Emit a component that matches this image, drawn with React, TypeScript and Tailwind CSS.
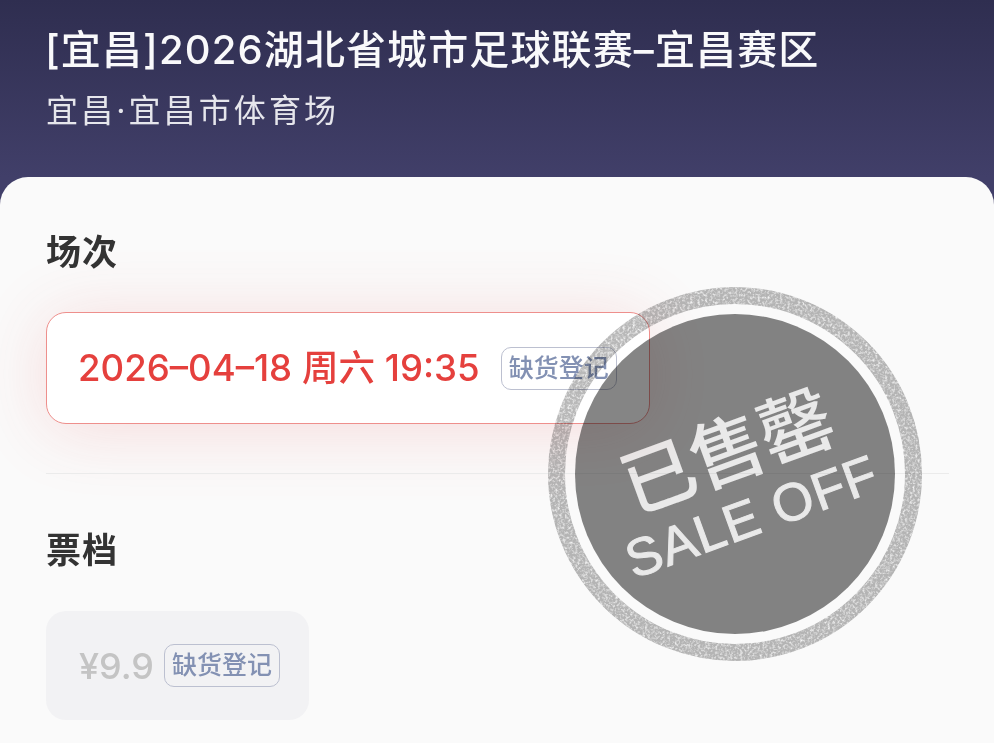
const cjk = "font-['Inter','Noto_Sans_CJK_SC',sans-serif]";

function WaitlistTag() {
  return (
    <span className="flex h-[43px] w-[116px] shrink-0 items-center justify-center rounded-[10px] border border-[#bcc0d0] text-[25px] font-medium leading-none text-[#8391b3]">
      缺货登记
    </span>
  );
}

/** Sold-out stamp that sits over the session card and the divider. */
function SoldOutStamp() {
  return (
    <svg
      viewBox="0 0 374 374"
      className="pointer-events-none absolute left-[548px] top-[287px] h-[374px] w-[374px] mix-blend-multiply"
    >
      <defs>
        <filter id="grain" filterUnits="userSpaceOnUse" x="0" y="0" width="374" height="374">
          <feTurbulence type="fractalNoise" baseFrequency="0.4" numOctaves="3" seed="4" result="noise" />
          <feColorMatrix
            in="noise"
            type="matrix"
            values="0 0 0 0 0  0 0 0 0 0  0 0 0 0 0  0 0 0 -2 1.85"
            result="speck"
          />
          <feComposite in="SourceGraphic" in2="speck" operator="in" />
          <feGaussianBlur stdDeviation="0.6" />
        </filter>
      </defs>
      <circle cx="187" cy="187" r="178.5" fill="none" stroke="#b8b8b8" strokeWidth="17" filter="url(#grain)" />
      <circle cx="187" cy="187" r="160" fill="#858585" />
      <g transform="rotate(-20 187 187)" textAnchor="middle" fill="#eeeeee">
        <text
          x="187"
          y="190"
          fontSize="74"
          fontWeight="500"
          letterSpacing="-1"
          fontFamily="'Noto Sans CJK SC', sans-serif"
        >
          已售罄
        </text>
        <text
          x="188"
          y="251"
          fontSize="53"
          letterSpacing="1"
          stroke="#eeeeee"
          strokeWidth="1"
          fontFamily="'Liberation Sans', sans-serif"
        >
          SALE OFF
        </text>
      </g>
    </svg>
  );
}

export default function App() {
  return (
    <div className={`relative h-[743px] w-[994px] overflow-hidden bg-[#413f69] ${cjk}`}>
      <header className="flex h-[177px] flex-col bg-gradient-to-b from-[#2f2e50] to-[#413f69] pl-[45px] pt-[25px]">
        <h1 className="text-[40px] font-medium leading-[50px] tracking-[1.12px] text-[#f9f9fb]">
          [宜昌]2026湖北省城市足球联赛–宜昌赛区
        </h1>
        <p className="ml-px mt-[13px] text-[32px] leading-[46px] tracking-[3.1px] text-[#e6e6ec]">宜昌·宜昌市体育场</p>
      </header>

      <main className="h-[566px] rounded-t-[28px] bg-[#fafafa] px-[46px] pt-[52px]">
        <h2 className="text-[35px] font-bold leading-[46px] tracking-[1px] text-[#333333]">场次</h2>

        <div className="mt-[37px] flex h-[112px] w-[604px] items-center rounded-[20px] border border-[#ee8f8c] bg-white pl-[31px] shadow-[0_6px_70px_rgba(229,64,61,0.16)]">
          <span className="text-[36.6px] font-medium leading-none text-[#e5403d]">2026–04–18 周六 19:35</span>
          <span className="ml-[21px]">
            <WaitlistTag />
          </span>
        </div>

        <div className="mt-[49px] h-px w-[903px] bg-[#ebebeb]" />

        <h2 className="mt-[53px] text-[35px] font-bold leading-[46px] tracking-[1px] text-[#333333]">票档</h2>

        <div className="mt-[38px] flex h-[109px] w-[263px] items-center rounded-[20px] bg-[#f2f2f4] pl-[33px]">
          <span className="text-[36px] font-medium leading-none text-[#c4c4c4]">¥9.9</span>
          <span className="ml-[10px]">
            <WaitlistTag />
          </span>
        </div>
      </main>

      <SoldOutStamp />
    </div>
  );
}
